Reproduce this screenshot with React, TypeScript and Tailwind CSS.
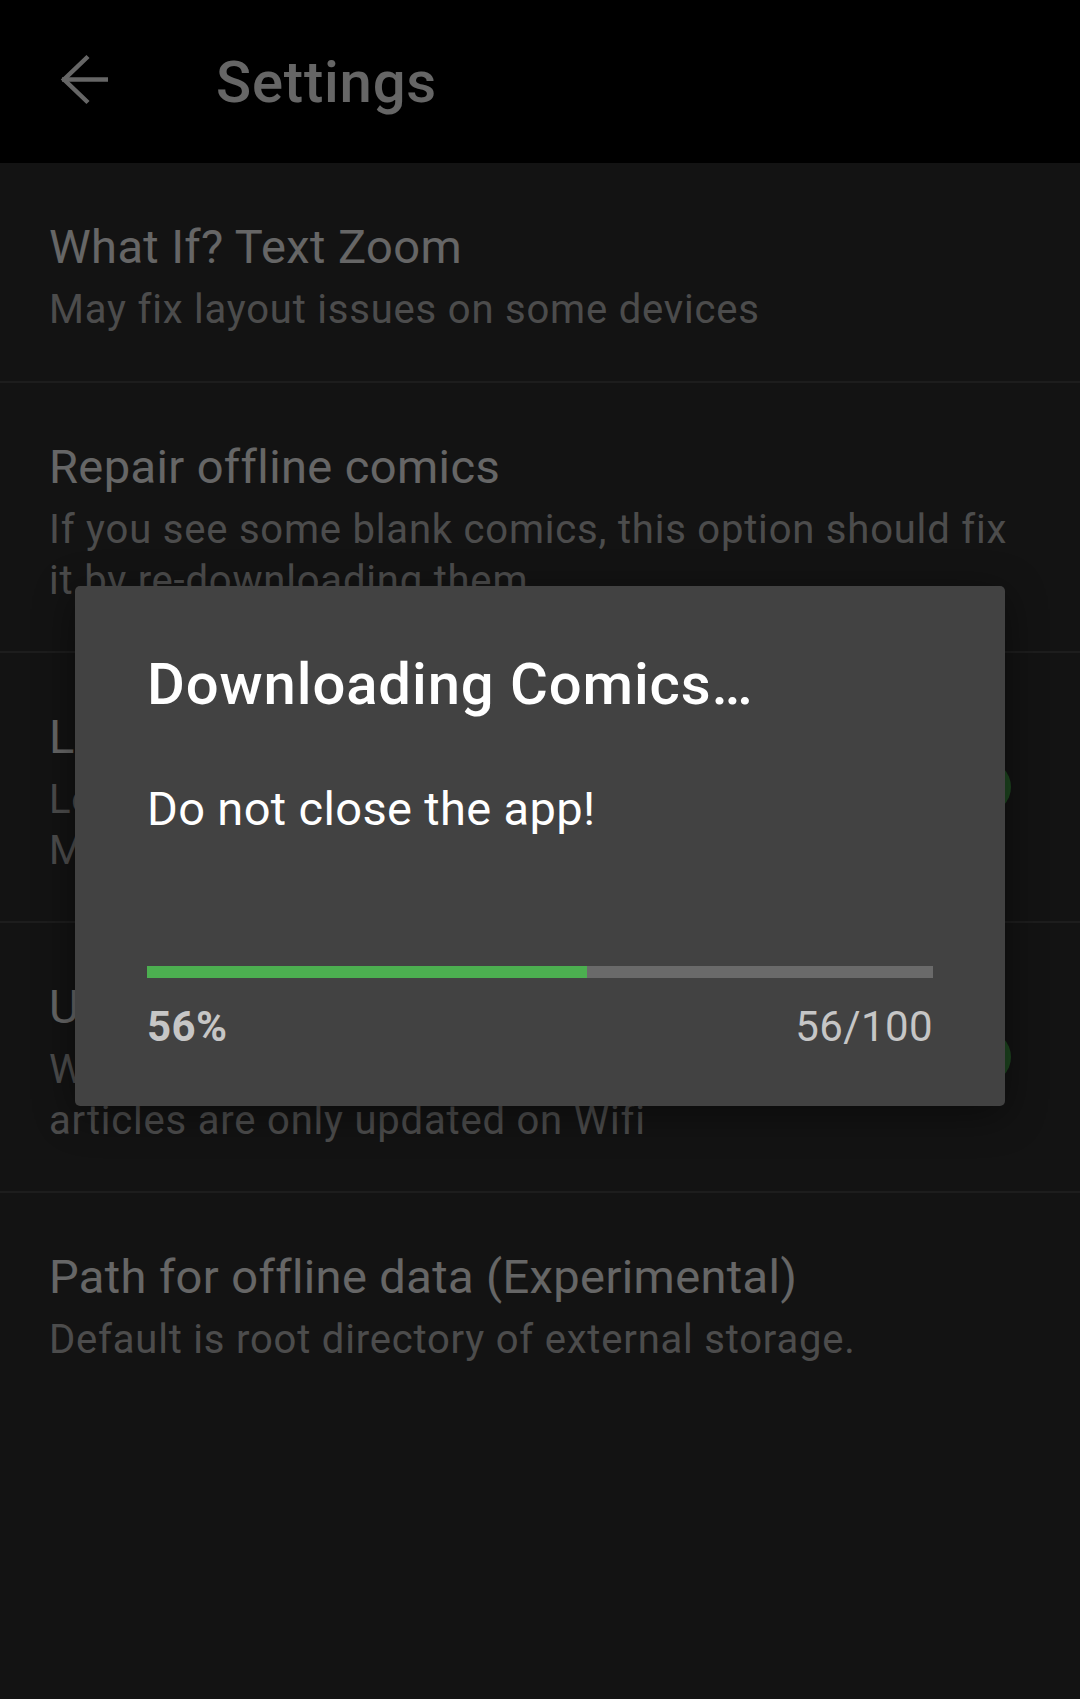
import React from "react";

type Item = {
  title: string;
  lines: string[];
  toggle?: boolean;
};

const items: Item[] = [
  { title: "What If? Text Zoom", lines: ["May fix layout issues on some devices"] },
  {
    title: "Repair offline comics",
    lines: ["If you see some blank comics, this option should fix", "it by re-downloading them"],
  },
  {
    title: "Launch to latest comic",
    lines: ["Load the newest comic when the app starts.", "Makes start-up slightly slower"],
    toggle: true,
  },
  {
    title: "Update only on Wifi",
    lines: ["When enabled, new comics and What If?", "articles are only updated on Wifi"],
    toggle: true,
  },
  {
    title: "Path for offline data (Experimental)",
    lines: ["Default is root directory of external storage."],
  },
];

function Switch() {
  return (
    <div className="relative w-[94px] h-[54px] flex items-center shrink-0">
      <div className="w-[88px] h-[38px] rounded-full bg-[#2f6e32]" />
      <div className="absolute right-0 top-0 w-[54px] h-[54px] rounded-full bg-[#4caf50]" />
    </div>
  );
}

export default function App() {
  return (
    <div className="relative w-[1080px] h-[1699px] overflow-hidden bg-[#303030] font-['Roboto',sans-serif]">
      {/* Toolbar */}
      <div className="h-[163px] bg-black flex items-center">
        <svg
          className="ml-[56px] shrink-0"
          width="58"
          height="58"
          viewBox="0 0 58 58"
          fill="none"
          stroke="#ffffff"
          strokeWidth="4.5"
        >
          <path d="M32 3.5 L8 26.5 L32 49.5" strokeLinejoin="miter" />
          <path d="M6 26.5 H52" />
        </svg>
        <div className="ml-[102px] text-white text-[58px] leading-[68px] font-medium tracking-[0.8px]">
          Settings
        </div>
      </div>

      {/* Preference list */}
      <div className="flex flex-col">
        {items.map((it, i) => (
          <div
            key={i}
            className={
              i < items.length - 1
                ? "flex items-center pl-[49px] pr-[69px] border-b-2 border-[#4a4a4a]"
                : "flex items-center pl-[49px] pr-[69px]"
            }
          >
            <div className={it.lines.length > 1 ? "flex-1 pt-[56px] pb-[45px]" : "flex-1 pt-[56px] pb-[46px]"}>
              <div className="text-white text-[47px] leading-[56px] tracking-[0.4px] whitespace-nowrap">
                {it.title}
              </div>
              <div className="mt-[9px] text-[rgba(255,255,255,0.7)] text-[40px] leading-[51px] tracking-[0.8px] whitespace-nowrap">
                {it.lines.map((l, j) => (
                  <div key={j}>{l}</div>
                ))}
              </div>
            </div>
            {it.toggle ? <Switch /> : null}
          </div>
        ))}
      </div>

      {/* Scrim + dialog */}
      <div className="absolute inset-0 bg-black/60 flex items-center justify-center pb-[7px]">
        <div className="w-[930px] rounded-[5px] bg-[#424242] px-[72px] pt-[64px] pb-[54px] shadow-[0_8px_40px_rgba(0,0,0,0.45)]">
          <div className="text-white text-[58px] leading-[68px] font-medium tracking-[0.9px] whitespace-nowrap">
            Downloading Comics…
          </div>
          <div className="mt-[63px] text-white text-[47px] leading-[56px] tracking-[0.35px]">
            Do not close the app!
          </div>
          <div className="mt-[129px] h-[12px] bg-[#6a6a6a] flex">
            <div className="h-full bg-[#4caf50]" style={{ width: "56%" }} />
          </div>
          <div className="mt-[24px] flex justify-between text-[42px] leading-[50px] text-[#c6c6c6] tracking-[0.4px]">
            <span className="font-bold">56%</span>
            <span>56/100</span>
          </div>
        </div>
      </div>
    </div>
  );
}
